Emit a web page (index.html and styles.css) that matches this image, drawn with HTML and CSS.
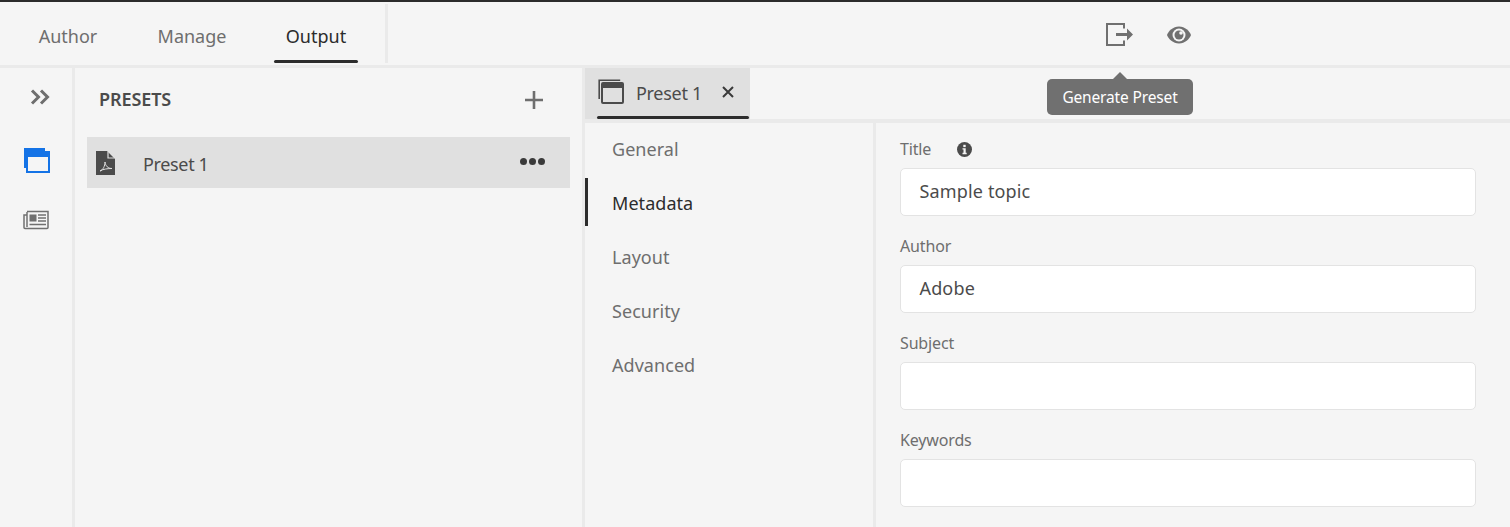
FILE: index.html
```html
<!DOCTYPE html>
<html lang="en">
<head>
<meta charset="utf-8">
<title>Output presets</title>
<link rel="stylesheet" href="styles.css">
</head>
<body>
<div class="app">
  <header class="topbar">
    <nav class="modes">
      <a class="mode">Author</a>
      <a class="mode">Manage</a>
      <a class="mode active">Output</a>
    </nav>
    <div class="actions">
      <svg class="act-icon" width="28" height="24" viewBox="0 0 28 24"><path d="M18 5.500V1H1v21h17v-4.500" fill="none" stroke="#707070" stroke-width="2"/><path d="M10 10h11V5.500l6 6-6 6V13H10z" fill="#707070"/></svg>
      <svg class="act-icon eye" width="26" height="24" viewBox="0 0 26 24"><path d="M13 3.500C7 3.500 2.500 8 1 12c1.500 4 6 8.500 12 8.500S23.500 16 25 12C23.500 8 19 3.500 13 3.500z" fill="#707070"/><circle cx="13" cy="12" r="6.500" fill="#f5f5f5"/><circle cx="13" cy="12" r="4.500" fill="#707070"/><circle cx="15" cy="10" r="1.800" fill="#f5f5f5"/></svg>
    </div>
    <div class="tooltip">Generate Preset</div>
  </header>
  <div class="body">
    <aside class="rail">
      <svg class="rail-chev" width="20" height="16" viewBox="0 0 20 16"><path d="M2 1.500l6.500 6.500L2 14.500M11 1.500l6.500 6.500-6.500 6.500" fill="none" stroke="#6e6e6e" stroke-width="3"/></svg>
      <svg class="rail-icon" width="26" height="25" viewBox="0 0 26 25"><path d="M1 20V1h20" fill="none" stroke="#1473e6" stroke-width="2"/><rect x="1" y="0" width="20" height="3" fill="#1473e6"/><rect x="3" y="4" width="22" height="20" fill="#f5f5f5" stroke="#1473e6" stroke-width="2"/><rect x="3" y="4" width="22" height="5" fill="#1473e6"/></svg>
      <svg class="rail-icon news" width="26" height="20" viewBox="0 0 26 20"><path d="M4 1.500h21v16a1 1 0 0 1-1 1H2a1 1 0 0 1-1-1V5h3" fill="none" stroke="#707070" stroke-width="1.500"/><path d="M4 2v15" stroke="#707070" stroke-width="1.500"/><rect x="6.500" y="4.500" width="7" height="7" fill="#707070"/><path d="M15 5h8M15 8h8M15 11h8M6.500 14.500h16.500" stroke="#707070" stroke-width="1.500"/></svg>
    </aside>
    <section class="presets">
      <div class="presets-head">
        <h2 class="presets-title">PRESETS</h2>
        <svg class="add" width="20" height="20" viewBox="0 0 20 20"><path d="M10 1v18M1 10h18" stroke="#6e6e6e" stroke-width="2.600"/></svg>
      </div>
      <div class="preset-row">
        <svg class="pdf" width="19" height="24" viewBox="0 0 19 24"><path d="M0 0h11l8 8v16H0z" fill="#4b4b4b"/><path d="M12 .500v6.500h6.500" fill="none" stroke="#e0e0e0" stroke-width="1.200"/><path d="M4 20c3-1 5-5 5-9 .5 4 3 6.500 7 6.500-4 0-9 .5-12 2.500z" fill="none" stroke="#e0e0e0" stroke-width="1"/></svg>
        <span class="preset-name">Preset 1</span>
        <span class="dots"><i></i><i></i><i></i></span>
      </div>
    </section>
    <main class="editor">
      <div class="tabs">
        <div class="tab">
          <svg width="26" height="25" viewBox="0 0 26 25"><path d="M1.200 20V1.200h21" fill="none" stroke="#4b4b4b" stroke-width="1.600"/><rect x="4" y="4" width="21" height="20" rx="1" fill="none" stroke="#4b4b4b" stroke-width="2"/><rect x="4" y="4" width="21" height="5" fill="#4b4b4b"/></svg>
          <span class="tab-name">Preset 1</span>
          <svg class="tab-x" width="12" height="12" viewBox="0 0 12 12"><path d="M1 1l10 10M11 1L1 11" stroke="#3a3a3a" stroke-width="2"/></svg>
        </div>
      </div>
      <div class="panes">
        <nav class="sections">
          <a class="section">General</a>
          <a class="section active">Metadata</a>
          <a class="section">Layout</a>
          <a class="section">Security</a>
          <a class="section">Advanced</a>
        </nav>
        <form class="form">
          <div class="field">
            <label class="label">Title<svg class="info" width="15" height="15" viewBox="0 0 15 15"><circle cx="7.500" cy="7.500" r="7.500" fill="#4b4b4b"/><rect x="6.300" y="2.800" width="2.400" height="2.300" fill="#f5f5f5"/><path d="M5.500 6.200h3.200v4.600h1v1.400h-4.200v-1.400h1V7.600h-1z" fill="#f5f5f5"/></svg></label>
            <div class="input">Sample topic</div>
          </div>
          <div class="field">
            <label class="label">Author</label>
            <div class="input">Adobe</div>
          </div>
          <div class="field">
            <label class="label">Subject</label>
            <div class="input"></div>
          </div>
          <div class="field">
            <label class="label">Keywords</label>
            <div class="input"></div>
          </div>
        </form>
      </div>
    </main>
  </div>
</div>
</body>
</html>
```
FILE: styles.css
```css
* { box-sizing: border-box; }
html, body { margin: 0; height: 100%; overflow: hidden; }
body {
  background: #f5f5f5;
  font-family: "Noto Sans", "Open Sans", sans-serif;
  color: #4b4b4b;
}
.app { height: 527px; display: flex; flex-direction: column; border-top: 2px solid #2c2c2c; }

.topbar {
  height: 66px;
  flex: none;
  display: flex;
  align-items: stretch;
  position: relative;
  border-bottom: 3px solid #eaeaea;
  padding-top: 2px;
}
.modes {
  width: 388px;
  display: flex;
  padding-left: 26px;
  gap: 40px;
  border-right: 3px solid #eaeaea;
  margin-bottom: 2px;
}
.mode {
  width: 84px;
  padding-top: 18px;
  text-align: center;
  font-size: 18px;
  line-height: 28px;
  letter-spacing: 0;
  color: #6e6e6e;
  position: relative;
}
.mode.active { color: #2c2c2c; }
.mode.active::after {
  content: "";
  position: absolute;
  left: 0; right: 0; bottom: 0;
  height: 3px;
  background: #2c2c2c;
  border-radius: 2px;
}
.actions {
  display: flex;
  align-items: center;
  gap: 32px;
  padding-left: 718px;
}
.act-icon { flex: none; }
.tooltip {
  position: absolute;
  left: 1047px;
  top: 77px;
  width: 146px;
  height: 36px;
  background: #707070;
  color: #fff;
  border-radius: 5px;
  font-size: 15.500px;
  line-height: 36px;
  letter-spacing: -0.15px;
  text-align: center;
  z-index: 2;
}
.tooltip::before {
  content: "";
  position: absolute;
  left: 66px;
  top: -7px;
  border-left: 7px solid transparent;
  border-right: 7px solid transparent;
  border-bottom: 7px solid #707070;
}

.body { flex: 1; display: flex; min-height: 0; }
.rail {
  width: 75px;
  flex: none;
  border-right: 3px solid #eaeaea;
  display: flex;
  flex-direction: column;
  align-items: center;
}
.rail-chev { margin-top: 21px; margin-left: 8px; }
.rail-icon { margin-top: 43px; margin-left: 1px; }
.rail-icon.news { margin-top: 37px; margin-left: 0; }

.presets {
  width: 510px;
  flex: none;
  border-right: 3px solid #eaeaea;
  padding: 0 12px;
}
.presets-head {
  height: 69px;
  display: flex;
  align-items: center;
  justify-content: space-between;
  padding: 0 26px 6px 12px;
}
.presets-title {
  margin: 0 0 1px;
  font-size: 18px;
  font-weight: 600;
  letter-spacing: -0.1px;
  color: #4b4b4b;
}
.preset-row {
  height: 51px;
  background: #e0e0e0;
  display: flex;
  align-items: center;
  padding: 0 25px 0 9px;
}
.preset-name { margin-left: 28px; margin-top: 2px; font-size: 18px; letter-spacing: -0.35px; flex: 1; }
.pdf { flex: none; }
.dots { display: flex; gap: 2px; margin-bottom: 2px; }
.dots i { width: 7px; height: 7px; border-radius: 50%; background: #3a3a3a; }

.editor { flex: 1; min-width: 0; display: flex; flex-direction: column; }
.tabs { height: 55px; flex: none; border-bottom: 4px solid #eaeaea; display: flex; }
.tab {
  width: 165px;
  height: 51px;
  background: #e0e0e0;
  display: flex;
  align-items: center;
  padding: 0 0 4px 13px;
  position: relative;
}
.tab::after {
  content: "";
  position: absolute;
  left: 12px; right: 1px; bottom: 0;
  height: 3px;
  background: #2c2c2c;
  border-radius: 2px;
}
.tab-name { margin-left: 12px; margin-top: 2px; font-size: 18px; letter-spacing: -0.3px; flex: 1; }
.tab-x { margin-right: 16px; }

.panes { flex: 1; display: flex; min-height: 0; }
.sections {
  width: 291px;
  flex: none;
  border-right: 3px solid #eaeaea;
  display: flex;
  flex-direction: column;
  gap: 6px;
}
.section {
  height: 48px;
  padding-left: 27px;
  font-size: 18px;
  line-height: 50px;
  letter-spacing: 0.05px;
  color: #6e6e6e;
  position: relative;
}
.section:first-child { margin-top: 1px; }
.section.active { color: #2c2c2c; }
.section.active::before {
  content: "";
  position: absolute;
  left: 0; top: 0; bottom: 0;
  width: 3px;
  background: #2c2c2c;
}

.form { flex: 1; padding: 13px 34px 0 24px; display: flex; flex-direction: column; gap: 18px; }
.label {
  display: flex;
  align-items: center;
  height: 31px;
  padding-bottom: 8px;
  font-size: 16px;
  letter-spacing: -0.15px;
  color: #6e6e6e;
}
.field:first-child .label { height: 32px; padding-bottom: 6px; }
.info { margin-left: 26px; }
.field { display: flex; flex-direction: column; }
.input {
  height: 48px;
  background: #fff;
  border: 1.500px solid #e3e3e3;
  border-radius: 5px;
  padding-left: 18.500px;
  font-size: 18px;
  line-height: 45px;
  letter-spacing: 0.15px;
  color: #4b4b4b;
}
```
